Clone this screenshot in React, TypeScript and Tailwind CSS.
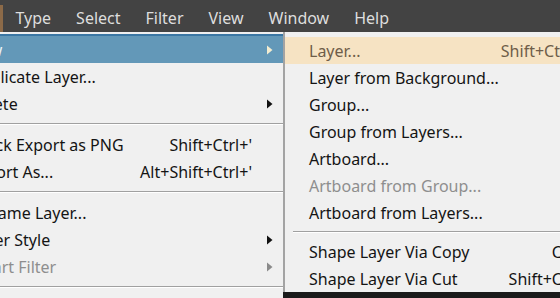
import React from 'react';

type Item =
  | { kind: 'sep' }
  | { kind: 'item'; label: string; shortcut?: string; sub?: boolean; disabled?: boolean; active?: boolean };

const leftItems: Item[] = [
  { kind: 'item', label: 'New', sub: true, active: true },
  { kind: 'item', label: 'Duplicate Layer...' },
  { kind: 'item', label: 'Delete', sub: true },
  { kind: 'sep' },
  { kind: 'item', label: 'Quick Export as PNG', shortcut: "Shift+Ctrl+'" },
  { kind: 'item', label: 'Export As...', shortcut: "Alt+Shift+Ctrl+'" },
  { kind: 'sep' },
  { kind: 'item', label: 'Rename Layer...' },
  { kind: 'item', label: 'Layer Style', sub: true },
  { kind: 'item', label: 'Smart Filter', sub: true, disabled: true },
  { kind: 'sep' },
  { kind: 'item', label: 'New Fill Layer', sub: true },
];

const subItems: Item[] = [
  { kind: 'item', label: 'Layer...', shortcut: 'Shift+Ctrl+N', active: true },
  { kind: 'item', label: 'Layer from Background...' },
  { kind: 'item', label: 'Group...' },
  { kind: 'item', label: 'Group from Layers...' },
  { kind: 'item', label: 'Artboard...' },
  { kind: 'item', label: 'Artboard from Group...', disabled: true },
  { kind: 'item', label: 'Artboard from Layers...' },
  { kind: 'sep' },
  { kind: 'item', label: 'Shape Layer Via Copy', shortcut: 'Ctrl+J' },
  { kind: 'item', label: 'Shape Layer Via Cut', shortcut: 'Shift+Ctrl+J' },
];

const Arrow = ({ color }: { color: string }) => (
  <svg width="6" height="10" viewBox="0 0 6 10" className="shrink-0">
    <path d="M0 0.5 L5.5 5 L0 9.5 Z" fill={color} />
  </svg>
);

const Separator = ({ h = 'h-[14px]' }: { h?: string }) => (
  <div className={`${h} flex flex-col justify-center`}>
    <div className="h-px bg-[#a0a0a0]" />
    <div className="h-px bg-white" />
  </div>
);

export default function App() {
  const menus = ['Type', 'Select', 'Filter', 'View', 'Window', 'Help'];

  return (
    <div
      className="w-[560px] h-[298px] overflow-hidden bg-[#1a1a1a] flex flex-col"
      style={{ fontFamily: '"Noto Sans", "Open Sans", sans-serif' }}
    >
      {/* Menu bar */}
      <div className="h-[32px] bg-[#434343] flex items-stretch shrink-0 text-[16px] text-[#dedede]">
        <div className="w-[3px] mt-[5px] bg-[#8c6a48]" />
        {menus.map((m) => (
          <div key={m} className="px-[12.5px] pt-[4px] flex items-center">
            {m}
          </div>
        ))}
      </div>

      <div className="flex items-start flex-1 min-h-0">
        {/* Layer menu (partly off screen) */}
        <div className="w-[283px] h-full overflow-hidden bg-[#f0f0f0] shrink-0 pt-[2px]">
          <div className="h-[2px] bg-[#3b77a4]" />
          <div className="-ml-[33px] text-[16px]">
            {leftItems.map((it, i) =>
              it.kind === 'sep' ? (
                <Separator key={i} />
              ) : (
                <div
                  key={i}
                  className={`h-[27px] flex items-center pl-[2px] pr-[10px] ${
                    it.active ? 'bg-[#6398b8] text-[#eef3f6]' : it.disabled ? 'text-[#8e8e8e]' : 'text-[#141414]'
                  }`}
                >
                  <span className="flex-1 whitespace-nowrap">{it.label}</span>
                  {it.shortcut && <span className="whitespace-nowrap mr-[21px]">{it.shortcut}</span>}
                  {it.sub && <Arrow color={it.active ? '#f3ecd0' : it.disabled ? '#8a8a8a' : '#111'} />}
                </div>
              )
            )}
          </div>
        </div>

        {/* New submenu */}
        <div className="w-[315px] shrink-0 bg-[#f0f0f0] border-l-2 border-[#a3a3a3] pt-[5px] text-[16px]">
          {subItems.map((it, i) =>
            it.kind === 'sep' ? (
              <div key={i} className="pl-[8px]">
                <Separator h="h-[12px]" />
              </div>
            ) : (
              <div
                key={i}
                className={`h-[27px] flex items-center pl-[24px] pr-[6px] ${
                  it.active ? 'bg-[#f6e3c3] text-[#6e5d49]' : it.disabled ? 'text-[#8e8e8e]' : 'text-[#141414]'
                }`}
              >
                <span className="flex-1 whitespace-nowrap">{it.label}</span>
                {it.shortcut && <span className="whitespace-nowrap">{it.shortcut}</span>}
              </div>
            )
          )}
        </div>
      </div>
    </div>
  );
}
